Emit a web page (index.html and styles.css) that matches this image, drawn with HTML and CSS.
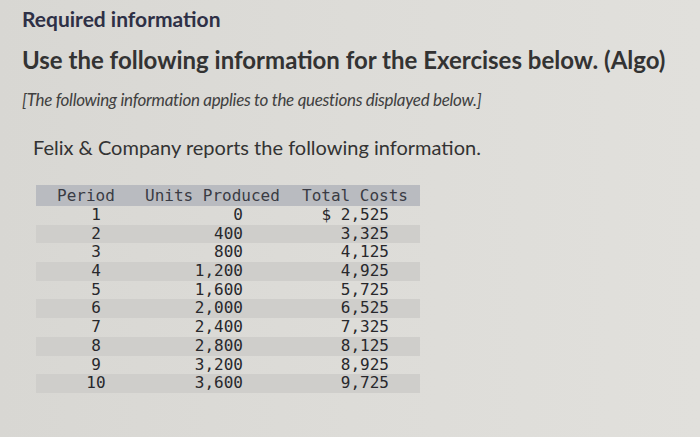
FILE: index.html
```html
<!DOCTYPE html>
<html>
<head>
<meta charset="utf-8">
<link rel="stylesheet" href="styles.css">
</head>
<body>
<div class="page">
  <h1 class="req">Required information</h1>
  <h2 class="use">Use the following information for the Exercises below. (Algo)</h2>
  <p class="note">[The following information applies to the questions displayed below.]</p>
  <p class="intro">Felix &amp; Company reports the following information.</p>
  <div class="tbl">
    <div class="row head"><span class="c1">Period</span><span class="c2">Units Produced</span><span class="c3">Total Costs</span></div>
    <div class="row"><span class="c1">1</span><span class="c2">0</span><span class="c3">$ 2,525</span></div>
    <div class="row alt"><span class="c1">2</span><span class="c2">400</span><span class="c3">3,325</span></div>
    <div class="row"><span class="c1">3</span><span class="c2">800</span><span class="c3">4,125</span></div>
    <div class="row alt"><span class="c1">4</span><span class="c2">1,200</span><span class="c3">4,925</span></div>
    <div class="row"><span class="c1">5</span><span class="c2">1,600</span><span class="c3">5,725</span></div>
    <div class="row alt"><span class="c1">6</span><span class="c2">2,000</span><span class="c3">6,525</span></div>
    <div class="row"><span class="c1">7</span><span class="c2">2,400</span><span class="c3">7,325</span></div>
    <div class="row alt"><span class="c1">8</span><span class="c2">2,800</span><span class="c3">8,125</span></div>
    <div class="row"><span class="c1">9</span><span class="c2">3,200</span><span class="c3">8,925</span></div>
    <div class="row alt"><span class="c1">10</span><span class="c2">3,600</span><span class="c3">9,725</span></div>
  </div>
</div>
</body>
</html>
```
FILE: styles.css
```css
html, body {
  margin: 0;
  padding: 0;
}
body {
  width: 700px;
  height: 437px;
  overflow: hidden;
  background: linear-gradient(90deg, #d8d7d3 0%, #dddcd8 50%, #e1e0dc 100%);
  font-family: Lato, "Liberation Sans", sans-serif;
}
.page {
  padding: 5px 0 0 22px;
}
.req {
  margin: 0;
  font-size: 21px;
  line-height: 28px;
  font-weight: 700;
  color: #2e3046;
}
.use {
  margin: 11px 0 0 0;
  font-size: 24px;
  line-height: 31px;
  font-weight: 700;
  color: #333333;
}
.note {
  margin: 12px 0 0 0;
  font-size: 17px;
  line-height: 25px;
  letter-spacing: -0.3px;
  font-style: italic;
  color: #404040;
}
.intro {
  margin: 22px 0 0 11px;
  font-size: 20px;
  line-height: 26px;
  color: #333;
}
.tbl {
  margin: 25px 0 0 14px;
  width: 384px;
  font-family: "DejaVu Sans Mono", monospace;
  font-size: 16px;
  color: #28282c;
}
.row {
  display: grid;
  grid-template-columns: 94px 160px 130px;
  height: 18.7px;
  line-height: 18.7px;
}
.row.alt {
  background: #cfcecb;
}
.row.head {
  height: 21px;
  line-height: 21px;
  background: #b9bbc0;
  color: #3a3b44;
}
.c1 { text-align: center; padding-left: 26px; }
.c2 { text-align: right; padding-right: 47px; }
.c3 { text-align: right; padding-right: 31px; }
.head .c1 { text-align: left; padding-left: 21px; }
.head .c2 { text-align: left; padding-left: 15px; padding-right: 0; }
.head .c3 { text-align: left; padding-left: 12px; padding-right: 0; white-space: nowrap; }
```
